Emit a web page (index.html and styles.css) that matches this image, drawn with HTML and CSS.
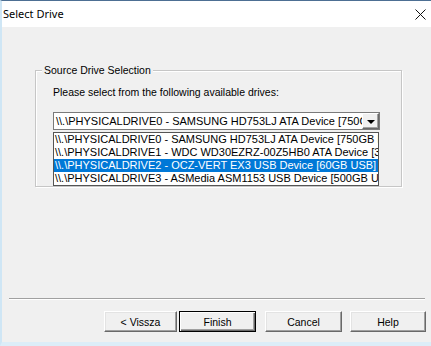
FILE: index.html
```html
<!DOCTYPE html>
<html lang="en">
<head>
    <meta charset="UTF-8">
    <title>Select Drive</title>
    <link rel="stylesheet" href="styles.css">
</head>
<body>
    <div class="window">
        <div class="titlebar">
            <span class="title">Select Drive</span>
            <svg class="close" width="11" height="11" viewBox="0 0 11 11">
                <path d="M0.5 0.5 L10.5 10.5 M10.5 0.5 L0.5 10.5" stroke="#111" stroke-width="1" fill="none"/>
            </svg>
        </div>

        <div class="content">
            <div class="group">
                <span class="legend">Source Drive Selection</span>
                <div class="prompt">Please select from the following available drives:</div>
                <div class="combo">
                    <div class="combo-field">
                        <span class="combo-text">\\.\PHYSICALDRIVE0 - SAMSUNG HD753LJ ATA Device [750GB IDE]</span>
                        <span class="combo-btn"><span class="arrow"></span></span>
                    </div>
                    <ul class="dropdown">
                        <li>\\.\PHYSICALDRIVE0 - SAMSUNG HD753LJ ATA Device [750GB IDE]</li>
                        <li>\\.\PHYSICALDRIVE1 - WDC WD30EZRZ-00Z5HB0 ATA Device [3TB IDE]</li>
                        <li class="selected"><span>\\.\PHYSICALDRIVE2 - OCZ-VERT EX3 USB Device [60GB USB]</span></li>
                        <li>\\.\PHYSICALDRIVE3 - ASMedia ASM1153 USB Device [500GB USB]</li>
                    </ul>
                </div>
            </div>

            <div class="separator"></div>

            <div class="buttons">
                <button class="btn btn-back">&lt; Vissza</button>
                <button class="btn btn-default">Finish</button>
                <button class="btn btn-cancel">Cancel</button>
                <button class="btn btn-help">Help</button>
            </div>
        </div>
    </div>
</body>
</html>
```

FILE: styles.css
```css
* {
    margin: 0;
    padding: 0;
    box-sizing: border-box;
}

body {
    width: 431px;
    height: 346px;
    overflow: hidden;
    background: #f0f0f0;
    font-family: "Liberation Sans", Arial, sans-serif;
    font-size: 10.5px;
    color: #000;
}

.window {
    width: 431px;
    height: 346px;
    border-top: 1px solid #4d6f93;
    border-left: 2px solid #cfe6f5;
    border-bottom: 4px solid #dcedf8;
    background: #f0f0f0;
}

.titlebar {
    height: 26px;
    background: #fff;
    display: flex;
    align-items: center;
    justify-content: space-between;
    padding: 0 5px 1px 1px;
}

.title {
    font-family: "Noto Sans", sans-serif;
    font-size: 11px;
    color: #000;
}

.close {
    margin-top: 1px;
}

.content {
    padding: 43px 0 0 33px;
}

/* group box */
.group {
    position: relative;
    width: 367px;
    height: 117px;
    border: 1px solid #c6c6c6;
    box-shadow: inset 1px 1px 0 #fff, 1px 1px 0 #fff;
    padding: 15px 0 0 17px;
}

.legend {
    position: absolute;
    top: -7px;
    left: 6px;
    padding: 0 2px;
    background: #f0f0f0;
    line-height: 13px;
}

.prompt {
    line-height: 13px;
}

.combo {
    position: relative;
    width: 327px;
    margin-top: 13px;
    font-size: 11px;
}

.combo-field {
    display: flex;
    height: 18px;
    background: #fff;
    border: 1px solid #7a7a7a;
    overflow: hidden;
}

.combo-text {
    flex: 1;
    white-space: nowrap;
    overflow: hidden;
    line-height: 16px;
    padding-left: 2px;
}

.combo-btn {
    width: 17px;
    height: 16px;
    background: #f0f0f0;
    border: 1px solid;
    border-color: #fff #696969 #696969 #fff;
    box-shadow: inset -1px -1px 0 #a0a0a0;
    display: flex;
    align-items: center;
    justify-content: center;
}

.arrow {
    width: 0;
    height: 0;
    border-left: 4px solid transparent;
    border-right: 4px solid transparent;
    border-top: 4px solid #000;
    margin-top: 1px;
}

.dropdown {
    position: absolute;
    top: 20px;
    left: 0;
    width: 326px;
    list-style: none;
    background: #fff;
    border: 1px solid #555;
}

.dropdown li {
    height: 13px;
    line-height: 13px;
    white-space: nowrap;
    overflow: hidden;
    padding-left: 1px;
}

.dropdown li.selected span {
    display: inline-block;
    height: 13px;
    padding: 0 3px 0 1px;
    margin-left: -1px;
    background: #0078d7;
    color: #fff;
}

.separator {
    width: 416px;
    margin: 111px 0 0 -26px;
    height: 2px;
    border-top: 1px solid #a0a0a0;
    border-bottom: 1px solid #fff;
}

.buttons {
    display: flex;
    margin: 11px 0 0 69px;
}

.btn {
    height: 21px;
    font-family: "Liberation Sans", Arial, sans-serif;
    font-size: 10.5px;
    color: #000;
    background: #f0f0f0;
    border: 1px solid;
    border-color: #fff #696969 #696969 #fff;
    box-shadow: inset -1px -1px 0 #a0a0a0, inset 1px 1px 0 #e3e3e3;
}

.btn-back {
    width: 73px;
}

.btn-default {
    width: 77px;
    margin-left: 2px;
    border-color: #000;
    box-shadow: inset 1px 1px 0 #fff, inset -1px -1px 0 #696969, inset -2px -2px 0 #a0a0a0;
}

.btn-cancel {
    width: 77px;
    margin-left: 9px;
}

.btn-help {
    width: 76px;
    margin-left: 8px;
}
```
